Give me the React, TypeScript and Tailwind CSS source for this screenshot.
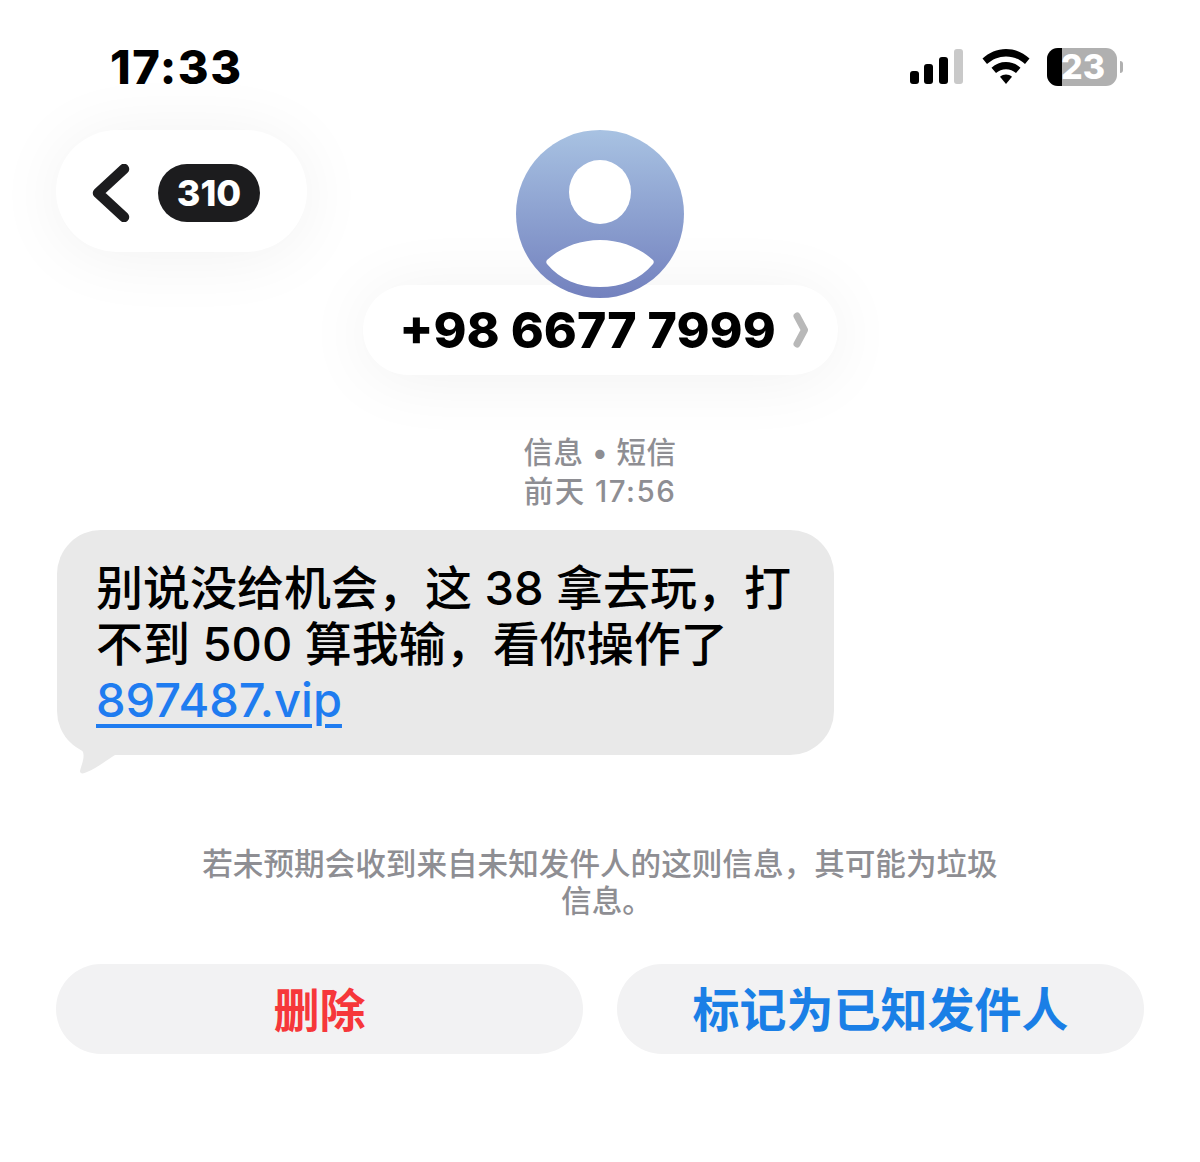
import React from 'react';

const font = '[font-family:Inter,"Noto_Sans_CJK_SC",sans-serif]';

const StatusIcons = () => (
  <div className="flex items-center gap-[17px]">
    <svg width="56" height="36" viewBox="0 0 56 36">
      <rect x="1" y="22" width="9" height="13" rx="3" fill="#000" />
      <rect x="15" y="15" width="9" height="20" rx="3" fill="#000" />
      <rect x="30" y="8" width="9" height="27" rx="3" fill="#000" />
      <rect x="45" y="0" width="9" height="35" rx="3" fill="#c9c9c9" />
    </svg>
    <svg width="48" height="36" viewBox="0 0 48 36" fill="#000">
      <path d="M24 0C15 0 7 3.600 0.500 9.500L5 15C10.200 10.200 16.800 7.400 24 7.400C31.200 7.400 37.800 10.200 43 15L47.500 9.500C41 3.600 33 0 24 0Z" />
      <path d="M24 13C18.500 13 13.600 15 9.500 18.700L14 24C16.800 21.500 20.200 20.200 24 20.200C27.800 20.200 31.200 21.500 34 24L38.500 18.700C34.400 15 29.500 13 24 13Z" />
      <path d="M24 25.500C21.800 25.500 19.800 26.300 18 27.800L24 35L30 27.800C28.200 26.300 26.200 25.500 24 25.500Z" />
    </svg>
    <div className="flex items-center gap-[3px]">
      <div className="relative flex h-[38px] w-[70px] items-center justify-center rounded-[11px] bg-[#b0b0b0]">
        <div className="absolute inset-y-0 left-0 w-[15px] rounded-l-[11px] bg-black" />
        <span className="relative ml-[2px] text-[34px] font-extrabold leading-[38px] text-white">23</span>
      </div>
      <div className="h-[12px] w-[3px] rounded-r-full bg-[#b0b0b0]" />
    </div>
  </div>
);

const Avatar = () => (
  <div className="relative z-10 h-[168px] w-[168px] overflow-hidden rounded-full bg-gradient-to-b from-[#a8c2e2] to-[#7381be]">
    <svg width="168" height="168" viewBox="0 0 168 168" fill="#fff">
      <ellipse cx="84" cy="62" rx="31" ry="32" />
      <path d="M31 130C44 118 63 110 84 110C105 110 124 118 137 130C138 131 138 133 137 134C124 150 105 157 84 157C63 157 44 150 31 134C30 133 30 131 31 130Z" />
    </svg>
  </div>
);

export default function App() {
  return (
    <div className={`flex h-[1162px] w-[1200px] flex-col bg-white text-black ${font}`}>
      <div className="flex h-[130px] items-start justify-between pl-[110px] pr-[77px] pt-[39px]">
        <span className="text-[47px] font-extrabold leading-[56px] tracking-[1.500px]">17:33</span>
        <div className="mt-[9px]">
          <StatusIcons />
        </div>
      </div>

      <div className="grid grid-cols-[1fr_auto_1fr]">
        <div className="pl-[56px]">
          <div className="flex h-[122px] w-[251px] items-center gap-[28px] rounded-[61px] bg-white pl-[36px] pt-[3px] shadow-[0_4px_70px_rgba(0,0,0,0.06)]">
            <svg width="38" height="58" viewBox="0 0 38 58" fill="none">
              <path d="M32 5L6 29L32 53" stroke="#1c1c1e" strokeWidth="10.500" strokeLinecap="round" strokeLinejoin="round" />
            </svg>
            <div className="flex h-[58px] w-[102px] items-center justify-center rounded-full bg-[#1c1c1e] text-[36px] font-extrabold text-white">
              310
            </div>
          </div>
        </div>
        <div className="flex flex-col items-center">
          <Avatar />
          <div className="-mt-[13px] flex h-[90px] w-[475px] items-center justify-center gap-[17px] rounded-[45px] bg-white pl-[8px] shadow-[0_4px_70px_rgba(0,0,0,0.06)]">
            <span className="text-[50px] font-extrabold leading-none">+98 6677 7999</span>
            <svg width="16" height="36" viewBox="0 0 16 36" fill="none">
              <path d="M4 4L11.500 18L4 32" stroke="#b8b8b8" strokeWidth="7" strokeLinecap="round" strokeLinejoin="round" />
            </svg>
          </div>
        </div>
        <div />
      </div>

      <div className="mt-[58px] text-center text-[29.500px] font-medium leading-[39px] text-[#8e8e93]">
        <div className="tracking-[0.500px]">信息 • 短信</div>
        <div className="tracking-[1.500px]">前天 17:56</div>
      </div>

      <div className="relative ml-[57px] mt-[19px] h-[225px] w-[777px] rounded-[44px] bg-[#e9e9e9] pl-[39px] pr-[30px] pt-[30px] text-[47px] font-medium leading-[56px]">
        <div className="whitespace-nowrap">别说没给机会，这 38 拿去玩，打</div>
        <div className="whitespace-nowrap">不到 500 算我输，看你操作了</div>
        <div className="text-[#1f7cf0] underline decoration-[4px] underline-offset-[7px]">897487.vip</div>
        <svg className="absolute left-0 top-[200px]" width="70" height="50" viewBox="0 0 70 50" fill="#e9e9e9">
          <path d="M8 6C14 14 24 18 26 22C28 28 24 36 23 41C23 44 26 44 30 42C40 38 50 30 58 25L58 0L8 0Z" />
        </svg>
      </div>

      <div className="mt-[90px] text-center text-[30.600px] font-medium leading-[37px] text-[#8e8e93]">
        <div>若未预期会收到来自未知发件人的这则信息，其可能为垃圾</div>
        <div className="pl-[14px]">信息。</div>
      </div>

      <div className="mt-[45px] flex gap-[34px] px-[56px]">
        <button className="h-[90px] flex-1 rounded-[45px] bg-[#f2f2f3] pt-[2px] text-[46px] font-bold text-[#f6373a]">
          删除
        </button>
        <button className="h-[90px] flex-1 rounded-[45px] bg-[#f2f2f3] pt-[2px] text-[47px] font-bold text-[#1a7fe6]">
          标记为已知发件人
        </button>
      </div>
    </div>
  );
}
